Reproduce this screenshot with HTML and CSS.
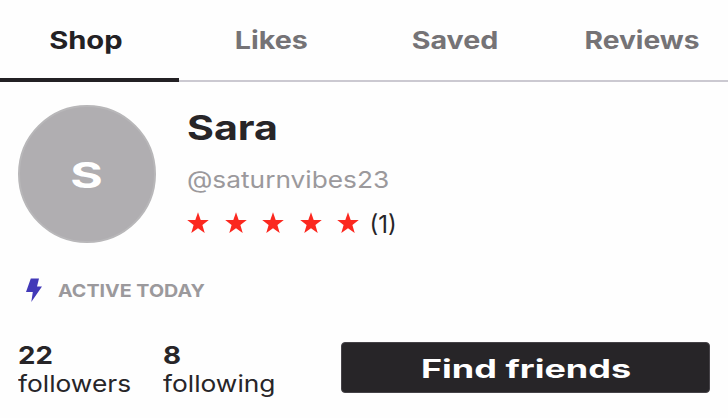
FILE: index.html
```html
<!DOCTYPE html>
<html lang="en">
<head>
<meta charset="utf-8">
<title>Sara</title>
<link rel="stylesheet" href="styles.css">
</head>
<body>
<svg width="0" height="0" class="symbols" aria-hidden="true">
  <symbol id="star" viewBox="0 0 22 22"><path d="M11 .3 13.7 7.9 21.8 8.1 15.4 13 17.7 21 11 16.3 4.3 21 6.6 13 .2 8.1 8.3 7.9Z"/></symbol>
</svg>
<nav class="tabs">
  <a class="tab active"><span class="wide">Shop</span></a>
  <a class="tab"><span class="wide">Likes</span></a>
  <a class="tab"><span class="wide">Saved</span></a>
  <a class="tab reviews"><span class="wide">Reviews</span></a>
</nav>
<main>
  <section class="profile">
    <div class="avatar"><span class="wide">S</span></div>
    <div class="details">
      <h1><span class="wide">Sara</span></h1>
      <p class="handle"><span class="wide">@saturnvibes23</span></p>
      <div class="rating">
        <svg><use href="#star"/></svg>
        <svg><use href="#star"/></svg>
        <svg><use href="#star"/></svg>
        <svg><use href="#star"/></svg>
        <svg><use href="#star"/></svg>
        <span class="wide">(1)</span>
      </div>
    </div>
  </section>
  <p class="status">
    <svg viewBox="0 0 16 24"><path d="M4.8 .5H13L11 8.5H16L5.3 24 6.8 14H0Z"/></svg>
    <span class="wide">ACTIVE TODAY</span>
  </p>
  <section class="summary">
    <div class="stat followers"><strong><span class="wide">22</span></strong><span class="wide label">followers</span></div>
    <div class="stat following"><strong><span class="wide">8</span></strong><span class="wide label">following</span></div>
    <button><span class="wide">Find friends</span></button>
  </section>
</main>
</body>
</html>
```

FILE: styles.css
```css
* { box-sizing: border-box; }
body {
  margin: 0;
  height: 418px;
  overflow: hidden;
  background: #fefefe;
  color: #272528;
  font-family: Inter, "Liberation Sans", sans-serif;
}
h1, p { margin: 0; }
.symbols { display: block; }
.wide {
  display: inline-block;
  white-space: nowrap;
  transform: scaleX(var(--stretch, 1));
  transform-origin: left center;
}

.tabs {
  display: grid;
  grid-template-columns: 179px 185px 183px 186px;
  height: 82px;
  border-bottom: 2px solid #cbc9d1;
}
.tab {
  height: 82px;
  text-align: center;
  font-size: 24.5px;
  font-weight: 700;
  line-height: 81px;
  color: #757376;
  --stretch: 1.17;
}
.tab .wide { transform-origin: center; }
.tab.active {
  padding-right: 7px;
  color: #232124;
  border-bottom: 4px solid #232124;
  --stretch: 1.19;
}
.tab.reviews { padding-left: 4px; --stretch: 1.15; }

main { padding: 23px 18px 0; }
.profile { display: flex; gap: 32px; height: 138px; }
.avatar {
  width: 138px;
  height: 138px;
  padding-right: 2px;
  border: 2px solid #b8b7b9;
  border-radius: 50%;
  background: #b0aeb1;
  color: #fff;
  font-size: 35px;
  font-weight: 700;
  line-height: 137px;
  text-align: center;
  --stretch: 1.42;
}
.avatar .wide { transform-origin: center; }
.details { margin-left: -1px; }
h1 { font-size: 34px; font-weight: 700; line-height: 45px; --stretch: 1.21; }
.handle {
  margin-top: 15px;
  font-size: 23.5px;
  line-height: 29px;
  color: #9b999c;
  --stretch: 1.118;
}
.rating { display: flex; margin-top: 16px; font-size: 24px; line-height: 30px; }
.rating svg { width: 22px; height: 22px; margin: 2px 15.5px 0 0; fill: #fb281f; }
.rating .wide { margin-left: -5px; --stretch: 1; }

.status {
  display: flex;
  align-items: center;
  height: 24px;
  margin-top: 35px;
  padding-left: 8px;
  font-size: 18px;
  font-weight: 700;
  color: #9b999c;
}
.status svg { width: 16px; height: 24px; margin-right: 16px; fill: #4239b8; }
.status .wide { --stretch: 1.093; }

.summary { display: flex; margin-top: 39px; }
.stat { width: 145px; }
.stat strong { display: block; font-size: 24.5px; line-height: 28px; --stretch: 1.13; }
.label { font-size: 23px; line-height: 31px; --stretch: 1.145; }
.following { width: 178px; }
button {
  width: 369px;
  height: 51px;
  margin-top: 1px;
  padding: 3px 0 0;
  border: 1px solid #454247;
  border-radius: 4px;
  background: #272528;
  color: #fff;
  font: 700 25px/46px Inter, "Liberation Sans", sans-serif;
  --stretch: 1.44;
}
button .wide { transform-origin: center; }
```
